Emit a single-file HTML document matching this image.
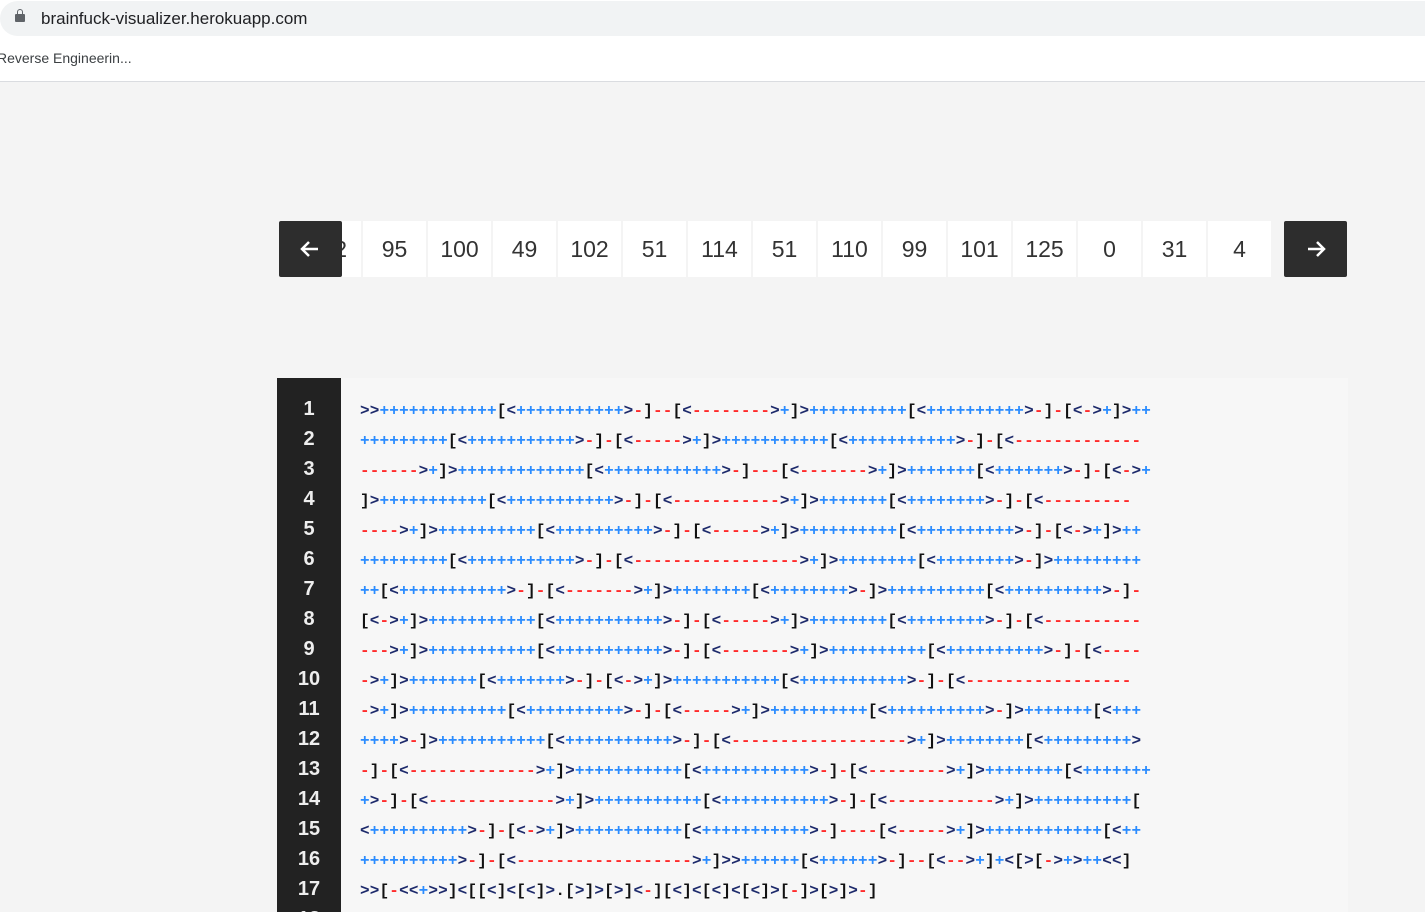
<!DOCTYPE html>
<html><head><meta charset="utf-8"><style>
*{margin:0;padding:0;box-sizing:border-box}
html,body{width:1425px;height:912px;overflow:hidden}
body{background:#f4f4f4;font-family:"Liberation Sans",sans-serif;position:relative}
.top{position:absolute;left:0;top:0;width:1425px;height:82px;background:#fff;border-bottom:1px solid #dadce0}
.url{position:absolute;left:0;top:1px;width:1425px;height:35px;background:#f1f3f4;border-radius:18px 0 0 18px;font-size:17px;color:#202124;line-height:35px;padding-left:41px}
.lock{position:absolute;left:15px;top:13px;width:10px;height:8px;background:#5f6368;border-radius:1px}
.lock:before{content:"";position:absolute;left:2px;top:-5px;width:6px;height:7px;border:1.5px solid #5f6368;border-radius:3px 3px 0 0;border-bottom:none;box-sizing:border-box}
.bm{position:absolute;left:-3px;top:50px;font-size:14px;color:#3c4043}
.cell{position:absolute;top:221px;width:63px;height:56px;background:#fff;text-align:center;line-height:56px;font-size:23px;color:#333}
.btn{position:absolute;top:221px;width:63px;height:56px;background:#2d2d2d;border-radius:2px}
.code{position:absolute;left:277px;top:378px;width:1071px;height:534px;background:#f7f7f7}
.gut{position:absolute;left:277px;top:378px;width:64px;height:534px;background:#222}
.ln{position:absolute;left:277px;width:64px;text-align:center;color:#eee;font-weight:bold;font-size:20px;line-height:30px}
.cl{position:absolute;left:360px;font-family:"Liberation Mono",monospace;font-size:16px;font-weight:bold;line-height:30px;white-space:pre;color:#111;letter-spacing:0.15px}
.a{color:#1d2a6b}.p{color:#2b8cff}.m{color:#ff2b2b}.b{color:#111}
</style></head><body>
<div class="top"><div class="url"><div class="lock"></div>brainfuck-visualizer.herokuapp.com</div><div class="bm">Reverse Engineerin...</div></div>

<div class="cell" style="left:298px;text-align:right;padding-right:14px">2</div>
<div class="cell" style="left:363px">95</div>
<div class="cell" style="left:428px">100</div>
<div class="cell" style="left:493px">49</div>
<div class="cell" style="left:558px">102</div>
<div class="cell" style="left:623px">51</div>
<div class="cell" style="left:688px">114</div>
<div class="cell" style="left:753px">51</div>
<div class="cell" style="left:818px">110</div>
<div class="cell" style="left:883px">99</div>
<div class="cell" style="left:948px">101</div>
<div class="cell" style="left:1013px">125</div>
<div class="cell" style="left:1078px">0</div>
<div class="cell" style="left:1143px">31</div>
<div class="cell" style="left:1208px">4</div>
<div class="btn" style="left:279px"><svg width="63" height="56"><path d="M39 28H23M30 21l-7 7 7 7" stroke="#fff" stroke-width="2.5" fill="none"/></svg></div>
<div class="btn" style="left:1284px"><svg width="63" height="56"><path d="M24 28h16M33 21l7 7-7 7" stroke="#fff" stroke-width="2.5" fill="none"/></svg></div>

<div class="code"></div><div class="gut"></div>
<div id="lines">
<div class="ln" style="top:394px">1</div><div class="cl" style="top:396px">&gt;&gt;++++++++++++[&lt;+++++++++++&gt;-]--[&lt;--------&gt;+]&gt;++++++++++[&lt;++++++++++&gt;-]-[&lt;-&gt;+]&gt;++</div>
<div class="ln" style="top:424px">2</div><div class="cl" style="top:426px">+++++++++[&lt;+++++++++++&gt;-]-[&lt;-----&gt;+]&gt;+++++++++++[&lt;+++++++++++&gt;-]-[&lt;-------------</div>
<div class="ln" style="top:454px">3</div><div class="cl" style="top:456px">------&gt;+]&gt;+++++++++++++[&lt;++++++++++++&gt;-]---[&lt;-------&gt;+]&gt;+++++++[&lt;+++++++&gt;-]-[&lt;-&gt;+</div>
<div class="ln" style="top:484px">4</div><div class="cl" style="top:486px">]&gt;+++++++++++[&lt;+++++++++++&gt;-]-[&lt;-----------&gt;+]&gt;+++++++[&lt;++++++++&gt;-]-[&lt;---------</div>
<div class="ln" style="top:514px">5</div><div class="cl" style="top:516px">----&gt;+]&gt;++++++++++[&lt;++++++++++&gt;-]-[&lt;-----&gt;+]&gt;++++++++++[&lt;++++++++++&gt;-]-[&lt;-&gt;+]&gt;++</div>
<div class="ln" style="top:544px">6</div><div class="cl" style="top:546px">+++++++++[&lt;+++++++++++&gt;-]-[&lt;-----------------&gt;+]&gt;++++++++[&lt;++++++++&gt;-]&gt;+++++++++</div>
<div class="ln" style="top:574px">7</div><div class="cl" style="top:576px">++[&lt;+++++++++++&gt;-]-[&lt;-------&gt;+]&gt;++++++++[&lt;++++++++&gt;-]&gt;++++++++++[&lt;++++++++++&gt;-]-</div>
<div class="ln" style="top:604px">8</div><div class="cl" style="top:606px">[&lt;-&gt;+]&gt;+++++++++++[&lt;+++++++++++&gt;-]-[&lt;-----&gt;+]&gt;++++++++[&lt;++++++++&gt;-]-[&lt;----------</div>
<div class="ln" style="top:634px">9</div><div class="cl" style="top:636px">---&gt;+]&gt;+++++++++++[&lt;+++++++++++&gt;-]-[&lt;-------&gt;+]&gt;++++++++++[&lt;++++++++++&gt;-]-[&lt;----</div>
<div class="ln" style="top:664px">10</div><div class="cl" style="top:666px">-&gt;+]&gt;+++++++[&lt;+++++++&gt;-]-[&lt;-&gt;+]&gt;+++++++++++[&lt;+++++++++++&gt;-]-[&lt;-----------------</div>
<div class="ln" style="top:694px">11</div><div class="cl" style="top:696px">-&gt;+]&gt;++++++++++[&lt;++++++++++&gt;-]-[&lt;-----&gt;+]&gt;++++++++++[&lt;++++++++++&gt;-]&gt;+++++++[&lt;+++</div>
<div class="ln" style="top:724px">12</div><div class="cl" style="top:726px">++++&gt;-]&gt;+++++++++++[&lt;+++++++++++&gt;-]-[&lt;------------------&gt;+]&gt;++++++++[&lt;+++++++++&gt;</div>
<div class="ln" style="top:754px">13</div><div class="cl" style="top:756px">-]-[&lt;-------------&gt;+]&gt;+++++++++++[&lt;+++++++++++&gt;-]-[&lt;--------&gt;+]&gt;++++++++[&lt;+++++++</div>
<div class="ln" style="top:784px">14</div><div class="cl" style="top:786px">+&gt;-]-[&lt;-------------&gt;+]&gt;+++++++++++[&lt;+++++++++++&gt;-]-[&lt;-----------&gt;+]&gt;++++++++++[</div>
<div class="ln" style="top:814px">15</div><div class="cl" style="top:816px">&lt;++++++++++&gt;-]-[&lt;-&gt;+]&gt;+++++++++++[&lt;+++++++++++&gt;-]----[&lt;-----&gt;+]&gt;++++++++++++[&lt;++</div>
<div class="ln" style="top:844px">16</div><div class="cl" style="top:846px">++++++++++&gt;-]-[&lt;------------------&gt;+]&gt;&gt;++++++[&lt;++++++&gt;-]--[&lt;--&gt;+]+&lt;[&gt;[-&gt;+&gt;++&lt;&lt;]</div>
<div class="ln" style="top:874px">17</div><div class="cl" style="top:876px">&gt;&gt;[-&lt;&lt;+&gt;&gt;]&lt;[[&lt;]&lt;[&lt;]&gt;.[&gt;]&gt;[&gt;]&lt;-][&lt;]&lt;[&lt;]&lt;[&lt;]&gt;[-]&gt;[&gt;]&gt;-]</div>
<div class="ln" style="top:904px">18</div>
</div>
<script>
document.querySelectorAll('.cl').forEach(function(el){
 var t=el.textContent,h='';
 for(var i=0;i<t.length;i++){var c=t[i],k=(c=='<'||c=='>')?'a':c=='+'?'p':c=='-'?'m':'b';
  var e=c=='<'?'&lt;':c=='>'?'&gt;':c;h+='<span class="'+k+'">'+e+'</span>';}
 el.innerHTML=h;
});
</script>
</body></html>
